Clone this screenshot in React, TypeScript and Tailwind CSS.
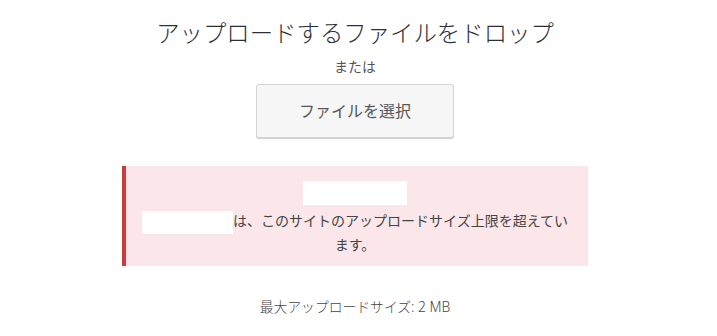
import React from "react";

const App = () => {
  return (
    <div className="w-[717px] h-[336px] bg-white font-['Noto_Sans','Noto_Sans_CJK_JP',sans-serif]">
      <div className="flex flex-col items-center pt-[18px] pr-[7px]">
        <h2 className="text-[23.4px] leading-[30px] font-light text-[#2c2f33] whitespace-nowrap">
          アップロードするファイルをドロップ
        </h2>
        <p className="mt-[9px] text-[14px] leading-[20px] text-[#555]">または</p>
        <button className="mt-[7px] w-[198px] h-[54px] rounded-[3px] border border-[#d4d4d4] bg-[#f6f6f6] shadow-[0_1px_1px_#cfcfcf] text-[16px] text-[#555]">
          ファイルを選択
        </button>

        {/* エラー通知 */}
        <div className="mt-[28px] w-[466px] border-l-4 border-[#cf3a40] bg-[#fbe7e9] pt-[15px] pb-[11px] pl-[14px] pr-[18px] text-center text-[14px] text-[#444]">
          <div className="mx-auto h-[24px] w-[104px] bg-white" />
          <p className="mt-[5px] leading-[21px]">
            <span className="inline-block h-[23px] w-[91px] bg-white align-middle" />
            は、このサイトのアップロードサイズ上限を超えています。
          </p>
        </div>

        <p className="mt-[31px] text-[13.8px] leading-[20px] font-light text-[#444]">
          最大アップロードサイズ: 2 MB
        </p>
      </div>
    </div>
  );
};

export default App;
